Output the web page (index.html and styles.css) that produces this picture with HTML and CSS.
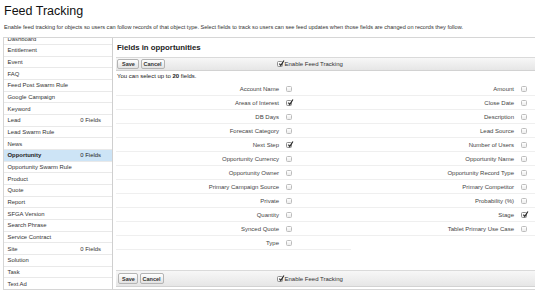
FILE: index.html
```html
<!DOCTYPE html>
<html>
<head>
<meta charset="utf-8">
<link rel="stylesheet" href="styles.css">
</head>
<body>
<h1 class="title">Feed Tracking</h1>
<p class="desc">Enable feed tracking for objects so users can follow records of that object type. Select fields to track so users can see feed updates when those fields are changed on records they follow.</p>
<div class="layout">
  <div class="objlist">
    <ul class="objs">
      <li class="obj"><span>Dashboard</span></li>
      <li class="obj"><span>Entitlement</span></li>
      <li class="obj"><span>Event</span></li>
      <li class="obj"><span>FAQ</span></li>
      <li class="obj"><span>Feed Post Swarm Rule</span></li>
      <li class="obj"><span>Google Campaign</span></li>
      <li class="obj"><span>Keyword</span></li>
      <li class="obj"><span>Lead</span><span class="cnt">0 Fields</span></li>
      <li class="obj"><span>Lead Swarm Rule</span></li>
      <li class="obj"><span>News</span></li>
      <li class="obj obj-sel"><span>Opportunity</span><span class="cnt">0 Fields</span></li>
      <li class="obj"><span>Opportunity Swarm Rule</span></li>
      <li class="obj"><span>Product</span></li>
      <li class="obj"><span>Quote</span></li>
      <li class="obj"><span>Report</span></li>
      <li class="obj"><span>SFGA Version</span></li>
      <li class="obj"><span>Search Phrase</span></li>
      <li class="obj"><span>Service Contract</span></li>
      <li class="obj"><span>Site</span><span class="cnt">0 Fields</span></li>
      <li class="obj"><span>Solution</span></li>
      <li class="obj"><span>Task</span></li>
      <li class="obj"><span>Text Ad</span></li>
    </ul>
  </div>
  <div class="main">
    <h2 class="main-title">Fields in opportunities</h2>
    <div class="bar">
      <button class="btn btn-save">Save</button>
      <button class="btn btn-cancel">Cancel</button>
      <label class="enable"><span class="cb cb-on"><svg class="tick" viewBox="0 0 8 8"><path d="M1.6 4.2 L3.2 6.2 L6.8 0.6" fill="none" stroke="#2a2a2a" stroke-width="1.3"/></svg></span>Enable Feed Tracking</label>
    </div>
    <p class="limit">You can select up to <b>20</b> fields.</p>
    <div class="fields">
      <div class="col">
        <div class="frow"><span class="flabel">Account Name</span><span class="cb"></span></div>
        <div class="frow"><span class="flabel">Areas of Interest</span><span class="cb cb-on"><svg class="tick" viewBox="0 0 8 8"><path d="M1.6 4.2 L3.2 6.2 L6.8 0.6" fill="none" stroke="#2a2a2a" stroke-width="1.3"/></svg></span></div>
        <div class="frow"><span class="flabel">DB Days</span><span class="cb"></span></div>
        <div class="frow"><span class="flabel">Forecast Category</span><span class="cb"></span></div>
        <div class="frow"><span class="flabel">Next Step</span><span class="cb cb-on"><svg class="tick" viewBox="0 0 8 8"><path d="M1.6 4.2 L3.2 6.2 L6.8 0.6" fill="none" stroke="#2a2a2a" stroke-width="1.3"/></svg></span></div>
        <div class="frow"><span class="flabel">Opportunity Currency</span><span class="cb"></span></div>
        <div class="frow"><span class="flabel">Opportunity Owner</span><span class="cb"></span></div>
        <div class="frow"><span class="flabel">Primary Campaign Source</span><span class="cb"></span></div>
        <div class="frow"><span class="flabel">Private</span><span class="cb"></span></div>
        <div class="frow"><span class="flabel">Quantity</span><span class="cb"></span></div>
        <div class="frow"><span class="flabel">Synced Quote</span><span class="cb"></span></div>
        <div class="frow"><span class="flabel">Type</span><span class="cb"></span></div>
      </div>
      <div class="col">
        <div class="frow"><span class="flabel">Amount</span><span class="cb"></span></div>
        <div class="frow"><span class="flabel">Close Date</span><span class="cb"></span></div>
        <div class="frow"><span class="flabel">Description</span><span class="cb"></span></div>
        <div class="frow"><span class="flabel">Lead Source</span><span class="cb"></span></div>
        <div class="frow"><span class="flabel">Number of Users</span><span class="cb"></span></div>
        <div class="frow"><span class="flabel">Opportunity Name</span><span class="cb"></span></div>
        <div class="frow"><span class="flabel">Opportunity Record Type</span><span class="cb"></span></div>
        <div class="frow"><span class="flabel">Primary Competitor</span><span class="cb"></span></div>
        <div class="frow"><span class="flabel">Probability (%)</span><span class="cb"></span></div>
        <div class="frow"><span class="flabel">Stage</span><span class="cb cb-on"><svg class="tick" viewBox="0 0 8 8"><path d="M1.6 4.2 L3.2 6.2 L6.8 0.6" fill="none" stroke="#2a2a2a" stroke-width="1.3"/></svg></span></div>
        <div class="frow"><span class="flabel">Tablet Primary Use Case</span><span class="cb"></span></div>
      </div>
    </div>
    <div class="bar bar-bottom">
      <button class="btn btn-save">Save</button>
      <button class="btn btn-cancel">Cancel</button>
      <label class="enable"><span class="cb cb-on"><svg class="tick" viewBox="0 0 8 8"><path d="M1.6 4.2 L3.2 6.2 L6.8 0.6" fill="none" stroke="#2a2a2a" stroke-width="1.3"/></svg></span>Enable Feed Tracking</label>
    </div>
  </div>
</div>
</body>
</html>
```
FILE: styles.css
```css
html, body {
  margin: 0;
  padding: 0;
  background: #fff;
  overflow: hidden;
}
body {
  font-family: "Liberation Sans", Arial, sans-serif;
  color: #333;
}
.title {
  margin: 0;
  padding-left: 4px;
  font-size: 12.5px;
  font-weight: normal;
  line-height: 22px;
  height: 22px;
  color: #111;
}
.desc {
  margin: 0;
  padding-left: 4px;
  font-size: 5.6px;
  line-height: 10px;
  height: 10px;
  white-space: nowrap;
  color: #333;
}
.layout {
  display: flex;
  margin: 5px 0 0 3px;
  height: 252px;
  border-top: 1px solid #d6d6d6;
  overflow: hidden;
}
.objlist {
  flex: 0 0 108px;
  border-left: 1px solid #d6d6d6;
  border-right: 1px solid #cfcfcf;
  border-bottom: 1px solid #d6d6d6;
  overflow: hidden;
}
.objs {
  list-style: none;
  margin: -4.6px 0 0 0;
  padding: 0;
}
.obj {
  display: flex;
  justify-content: space-between;
  align-items: center;
  height: 11.67px;
  box-sizing: border-box;
  border-bottom: 1px solid #e9e9e9;
  padding: 0 11px 0 3.5px;
  font-size: 5.9px;
  color: #333;
}
.obj-sel {
  background: #cde4f6;
  font-weight: bold;
  color: #222;
}
.obj-sel .cnt {
  font-weight: normal;
}
.main {
  flex: 1 1 auto;
  min-width: 0;
  padding-left: 3px;
  border-bottom: 1px solid #d6d6d6;
}
.main-title {
  margin: 0;
  padding: 1px 0 0 1px;
  font-size: 7.8px;
  line-height: 18px;
  height: 19px;
  box-sizing: border-box;
  font-weight: bold;
  color: #222;
}
.bar {
  display: flex;
  align-items: center;
  height: 14px;
  box-sizing: border-box;
  padding: 0 1px;
  border-top: 1px solid #dadada;
  border-bottom: 1px solid #d2d2d2;
  background: linear-gradient(#f7f7f7, #e6e6e6);
  width: 600px;
}
.bar-bottom {
  height: 17px;
  margin-top: 20px;
  padding-left: 2px;
}
.btn {
  font-family: "Liberation Sans", Arial, sans-serif;
  font-weight: bold;
  font-size: 5.5px;
  height: 10.5px;
  line-height: 8px;
  margin: 0 1.5px 0 0;
  border: 1px solid #b4b4b4;
  border-radius: 2px;
  background: linear-gradient(#ffffff, #e2e2e2);
  color: #333;
  box-sizing: border-box;
}
.btn-save { padding: 0 4px; width: 22px; }
.btn-cancel { padding: 0 2px; width: 24px; }
.bar-bottom .btn-save { width: 20px; padding: 0 3px; }
.enable {
  display: flex;
  align-items: center;
  margin-left: 111px;
  font-size: 6px;
  color: #333;
}
.bar-bottom .enable {
  margin-left: 112px;
}
.enable .cb {
  margin-right: 1.5px;
}
.limit {
  margin: 0;
  padding-left: 1px;
  font-size: 6px;
  line-height: 11px;
  height: 11px;
  color: #222;
}
.fields {
  display: flex;
  width: 470px;
}
.col {
  flex: 0 0 235px;
}
.frow {
  display: flex;
  align-items: center;
  height: 14px;
  box-sizing: border-box;
  border-bottom: 1px solid #efefef;
}
.flabel {
  flex: 0 0 163px;
  text-align: right;
  font-size: 6px;
  color: #444;
  padding-top: 0.5px;
}
.frow .cb {
  margin-left: 7px;
}
.cb {
  position: relative;
  display: inline-block;
  flex: 0 0 auto;
  width: 6px;
  height: 6px;
  box-sizing: border-box;
  border: 1px solid #bdbdbd;
  border-radius: 1.5px;
  background: linear-gradient(#ffffff, #ececec);
}
.cb-on {
  border-color: #8f8f8f;
}
.tick {
  position: absolute;
  left: -0.5px;
  top: -2px;
  width: 7px;
  height: 7px;
}
```
